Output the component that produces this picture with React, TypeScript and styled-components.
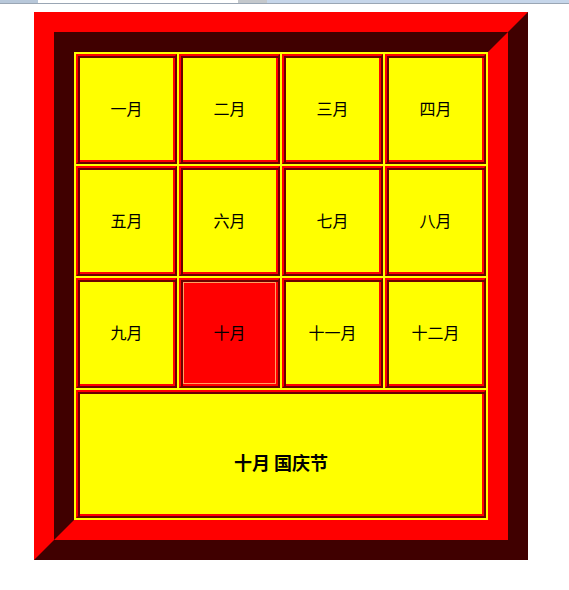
import React from "react";
import styled, { createGlobalStyle } from "styled-components";

const RED = "#ff0000";
const DARK = "#400000";
const CELL_DARK = "#6a0000";
const YELLOW = "#ffff00";

const GlobalStyle = createGlobalStyle`
  html, body {
    margin: 0;
    padding: 0;
    background: #ffffff;
  }
  body {
    font-family: "Noto Sans CJK SC", "Noto Sans", sans-serif;
  }
`;

const Page = styled.div`
  width: 569px;
  height: 590px;
  display: flex;
  flex-direction: column;
`;

const TopStrip = styled.div`
  display: flex;
  height: 3px;
  border-bottom: 1px solid #9aa6b4;
`;

const StripSegment = styled.div<{ $w?: number; $bg: string }>`
  flex: ${(p) => (p.$w ? `0 0 ${p.$w}px` : "1 1 auto")};
  background: ${(p) => p.$bg};
`;

const OuterFrame = styled.div`
  margin: 8px 0 0 34px;
  width: 494px;
  height: 548px;
  box-sizing: border-box;
  border: 20px solid;
  border-color: ${RED} ${DARK} ${DARK} ${RED};
`;

const InnerFrame = styled.div`
  width: 100%;
  height: 100%;
  box-sizing: border-box;
  border: 20px solid;
  border-color: ${DARK} ${RED} ${RED} ${DARK};
`;

const Grid = styled.div`
  width: 100%;
  height: 100%;
  box-sizing: border-box;
  background: ${YELLOW};
  padding: 2px;
  display: grid;
  grid-template-columns: repeat(4, 101px);
  grid-template-rows: 110px 110px 110px 128px;
  gap: 2px;
`;

const Cell = styled.div<{ $active?: boolean; $wide?: boolean }>`
  box-sizing: border-box;
  border: 2px solid;
  border-color: ${RED} ${CELL_DARK} ${CELL_DARK} ${RED};
  box-shadow: inset 2px 2px 0 0 ${CELL_DARK}, inset -2px -2px 0 0 ${RED};
  background: ${(p) => (p.$active ? RED : YELLOW)};
  outline: ${(p) => (p.$active ? "1px solid #ffa060" : "none")};
  outline-offset: -5px;
  grid-column: ${(p) => (p.$wide ? "1 / span 4" : "auto")};
  display: flex;
  align-items: center;
  justify-content: center;
  padding: ${(p) => (p.$wide ? "16px 0 0" : "0 0 3px")};
  color: #000;
  font-size: ${(p) => (p.$wide ? "18px" : "16px")};
  font-weight: ${(p) => (p.$wide ? 700 : 400)};
  line-height: 1;
`;

const months = [
  "一月", "二月", "三月", "四月",
  "五月", "六月", "七月", "八月",
  "九月", "十月", "十一月", "十二月",
];

export default function App() {
  return (
    <>
      <GlobalStyle />
      <Page>
        <TopStrip>
          <StripSegment $w={38} $bg="#b8c8da" />
          <StripSegment $w={200} $bg="#ffffff" />
          <StripSegment $w={29} $bg="#c4c8cc" />
          <StripSegment $bg="#c6d6ea" />
        </TopStrip>
        <OuterFrame>
          <InnerFrame>
            <Grid>
              {months.map((m) => (
                <Cell key={m} $active={m === "十月"}>
                  {m}
                </Cell>
              ))}
              <Cell $wide>十月 国庆节</Cell>
            </Grid>
          </InnerFrame>
        </OuterFrame>
      </Page>
    </>
  );
}
